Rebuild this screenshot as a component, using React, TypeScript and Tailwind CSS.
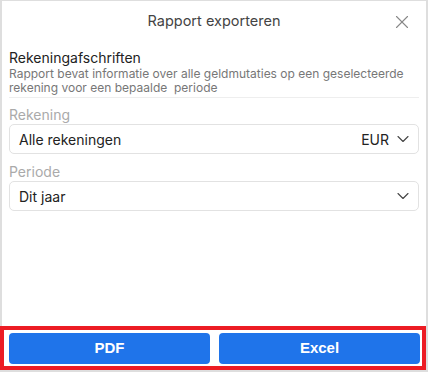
import { X, ChevronDown } from 'lucide-react';

const font = { fontFamily: "Inter, 'Noto Sans', sans-serif" };

function Select({ value, suffix }: { value: string; suffix?: string }) {
  return (
    <div className="h-[30px] rounded-[5px] border border-[#e2e2e2] flex items-center pl-[9px] pr-[5px] text-[14px] text-[#222]">
      <span className="flex-1">{value}</span>
      {suffix && <span className="mr-[4px]">{suffix}</span>}
      <ChevronDown className="size-[20px] text-[#444]" strokeWidth={1.3} />
    </div>
  );
}

export default function App() {
  return (
    <div className="w-[428px] h-[372px] bg-[#dedede] pt-px px-[2px] pb-[2px]" style={font}>
      <div className="h-full bg-white flex flex-col">
        {/* Header */}
        <div className="h-10 relative flex items-center justify-center">
          <h2 className="text-[14.5px] text-[#444]">Rapport exporteren</h2>
          <button className="absolute right-[13px] top-[10px] text-[#888]">
            <X className="size-[22px]" strokeWidth={1.2} />
          </button>
        </div>

        {/* Content */}
        <div className="flex-1 px-[7px]">
          <div className="pt-[8px] pb-[2px] border-b border-[#eeeeee]">
            <div className="text-[14px] leading-[18px] text-[#222]">Rekeningafschriften</div>
            <p className="text-[12px] leading-[14px] text-[#777]">
              Rapport bevat informatie over alle geldmutaties op een geselecteerde rekening voor een bepaalde&nbsp; periode
            </p>
          </div>

          <div className="mt-[8px] text-[14px] leading-[18px] text-[#aaa]">Rekening</div>
          <Select value="Alle rekeningen" suffix="EUR" />

          <div className="mt-[9px] text-[14px] leading-[18px] text-[#aaa]">Periode</div>
          <Select value="Dit jaar" />
        </div>

        {/* Footer */}
        <div className="-ml-[2px] h-[44px] border-4 border-[#ec1c24] pl-[5px] pr-[2px] pt-[3px] pb-[2px] flex gap-[9px]">
          <button
            className="flex-1 rounded-[4px] bg-[#1f74ea] text-white text-[15px] font-bold"
            style={{ fontFamily: "'Liberation Sans', Arial, sans-serif" }}
          >
            PDF
          </button>
          <button
            className="flex-1 rounded-[4px] bg-[#1f74ea] text-white text-[15px] font-bold"
            style={{ fontFamily: "'Liberation Sans', Arial, sans-serif" }}
          >
            Excel
          </button>
        </div>
      </div>
    </div>
  );
}
